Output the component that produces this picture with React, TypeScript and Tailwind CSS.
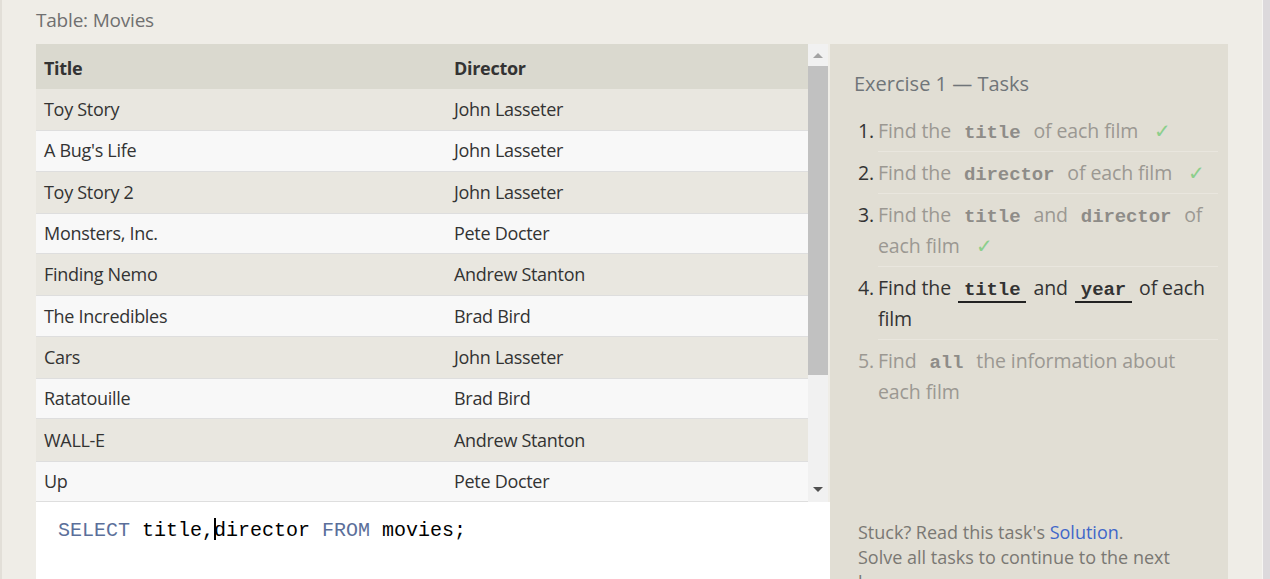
import React from 'react';

const movies = [
    { title: 'Toy Story', director: 'John Lasseter' },
    { title: "A Bug's Life", director: 'John Lasseter' },
    { title: 'Toy Story 2', director: 'John Lasseter' },
    { title: 'Monsters, Inc.', director: 'Pete Docter' },
    { title: 'Finding Nemo', director: 'Andrew Stanton' },
    { title: 'The Incredibles', director: 'Brad Bird' },
    { title: 'Cars', director: 'John Lasseter' },
    { title: 'Ratatouille', director: 'Brad Bird' },
    { title: 'WALL-E', director: 'Andrew Stanton' },
    { title: 'Up', director: 'Pete Docter' },
];

const Code: React.FC<{ children: React.ReactNode; active?: boolean }> = ({ children, active }) => (
    <code
        className={`mx-[2px] px-[6px] font-bold text-[19px] leading-none [font-family:'Liberation_Mono',monospace] ${
            active ? 'text-[#333] border-b-2 border-[#222]' : 'text-[#8e8c88]'
        }`}
    >
        {children}
    </code>
);

const Check: React.FC = () => <span className="ml-4 text-[#8ccf8c]">✓</span>;

const Task: React.FC<{ n: number; state: 'done' | 'active' | 'todo'; last?: boolean; children: React.ReactNode }> = ({
    n,
    state,
    last,
    children,
}) => (
    <li className="flex">
        <span className={`w-[20px] shrink-0 pt-[5px] ${state === 'todo' ? 'text-[#9b9892]' : 'text-[#333]'}`}>{n}.</span>
        <div
            className={`flex-1 py-[5px] ${last ? '' : 'border-b border-[#e9e6de]'} ${
                state === 'active' ? 'text-[#333]' : 'text-[#9b9892]'
            }`}
        >
            {children}
        </div>
    </li>
);

export default function App() {
    return (
        <div className="flex h-[579px] w-full overflow-hidden bg-[#efede7] [font-family:'Open_Sans',sans-serif]">
            <div className="w-[2px] shrink-0 bg-[#e2dfd8]" />
            <div className="flex-1 pl-[34px] flex flex-col">
                <div className="h-[44px] pt-[6px] text-[19px] text-[#707070] tracking-[-0.2px]">Table: Movies</div>
                <div className="flex flex-1 min-h-0">
                    {/* left: table + editor */}
                    <div className="w-[794px] flex flex-col">
                        <div className="flex">
                            <div className="w-[772px] text-[18px] text-[#333] tracking-[-0.3px]">
                                <div className="flex h-[45px] pt-[3px] items-center bg-[#dad9cf] font-bold">
                                    <div className="w-[410px] pl-[8px]">Title</div>
                                    <div className="pl-[8px]">Director</div>
                                </div>
                                {movies.map((m, i) => (
                                    <div
                                        key={m.title}
                                        className={`flex h-[41.3px] items-center ${
                                            i % 2 === 0 ? 'bg-[#e9e7e0]' : 'bg-[#f8f8f8] border-y border-[#dedede]'
                                        }`}
                                    >
                                        <div className="w-[410px] pl-[8px]">{m.title}</div>
                                        <div className="pl-[8px]">{m.director}</div>
                                    </div>
                                ))}
                            </div>
                            {/* scrollbar */}
                            <div className="w-[20px] bg-[#f1f1f1] flex flex-col items-center">
                                <div className="h-[22px] flex items-center justify-center">
                                    <svg width="10" height="6" viewBox="0 0 10 6">
                                        <path d="M0 6 L5 1 L10 6 Z" fill="#a3a3a3" />
                                    </svg>
                                </div>
                                <div className="w-[20px] h-[309px] bg-[#c1c1c1]" />
                                <div className="flex-1" />
                                <div className="h-[24px] flex items-center justify-center">
                                    <svg width="10" height="6" viewBox="0 0 10 6">
                                        <path d="M0 0 L10 0 L5 5 Z" fill="#505050" />
                                    </svg>
                                </div>
                            </div>
                        </div>
                        <div className="flex-1 bg-white pl-[22px] pt-[14px] text-[20px] text-black [font-family:'Liberation_Mono',monospace] whitespace-pre">
                            <span className="text-[#5b6f9a]">SELECT</span> title,
                            <span className="inline-block w-[2px] h-[22px] -mr-[2px] align-[-4px] bg-black" />
                            director <span className="text-[#5b6f9a]">FROM</span> movies;
                        </div>
                    </div>
                    {/* right: tasks */}
                    <div className="w-[398px] bg-[#e1ded4] pl-[24px] pr-[10px] pt-[25px] flex flex-col">
                        <div className="text-[20px] text-[#707579]">Exercise 1 — Tasks</div>
                        <ol className="mt-[11px] ml-[4px] text-[19.5px] leading-[31px] tracking-[-0.1px]">
                            <Task n={1} state="done">
                                Find the <Code>title</Code> of each film
                                <Check />
                            </Task>
                            <Task n={2} state="done">
                                Find the <Code>director</Code> of each film
                                <Check />
                            </Task>
                            <Task n={3} state="done">
                                Find the <Code>title</Code> and <Code>director</Code> of each film
                                <Check />
                            </Task>
                            <Task n={4} state="active">
                                Find the <Code active>title</Code> and <Code active>year</Code> of each film
                            </Task>
                            <Task n={5} state="todo" last>
                                Find <Code>all</Code> the information about each film
                            </Task>
                        </ol>
                        <div className="flex-1" />
                        <div className="ml-[4px] pr-[6px] text-[18px] leading-[25px] text-[#7a7873] h-[59px] shrink-0">
                            <p>
                                Stuck? Read this task's <a className="text-[#3f67c9]">Solution</a>.
                            </p>
                            <p>Solve all tasks to continue to the next lesson.</p>
                        </div>
                    </div>
                </div>
            </div>
            <div className="w-[8px] shrink-0 border-l border-[#f6f5f2] bg-[#dcd9dc]" />
        </div>
    );
}
